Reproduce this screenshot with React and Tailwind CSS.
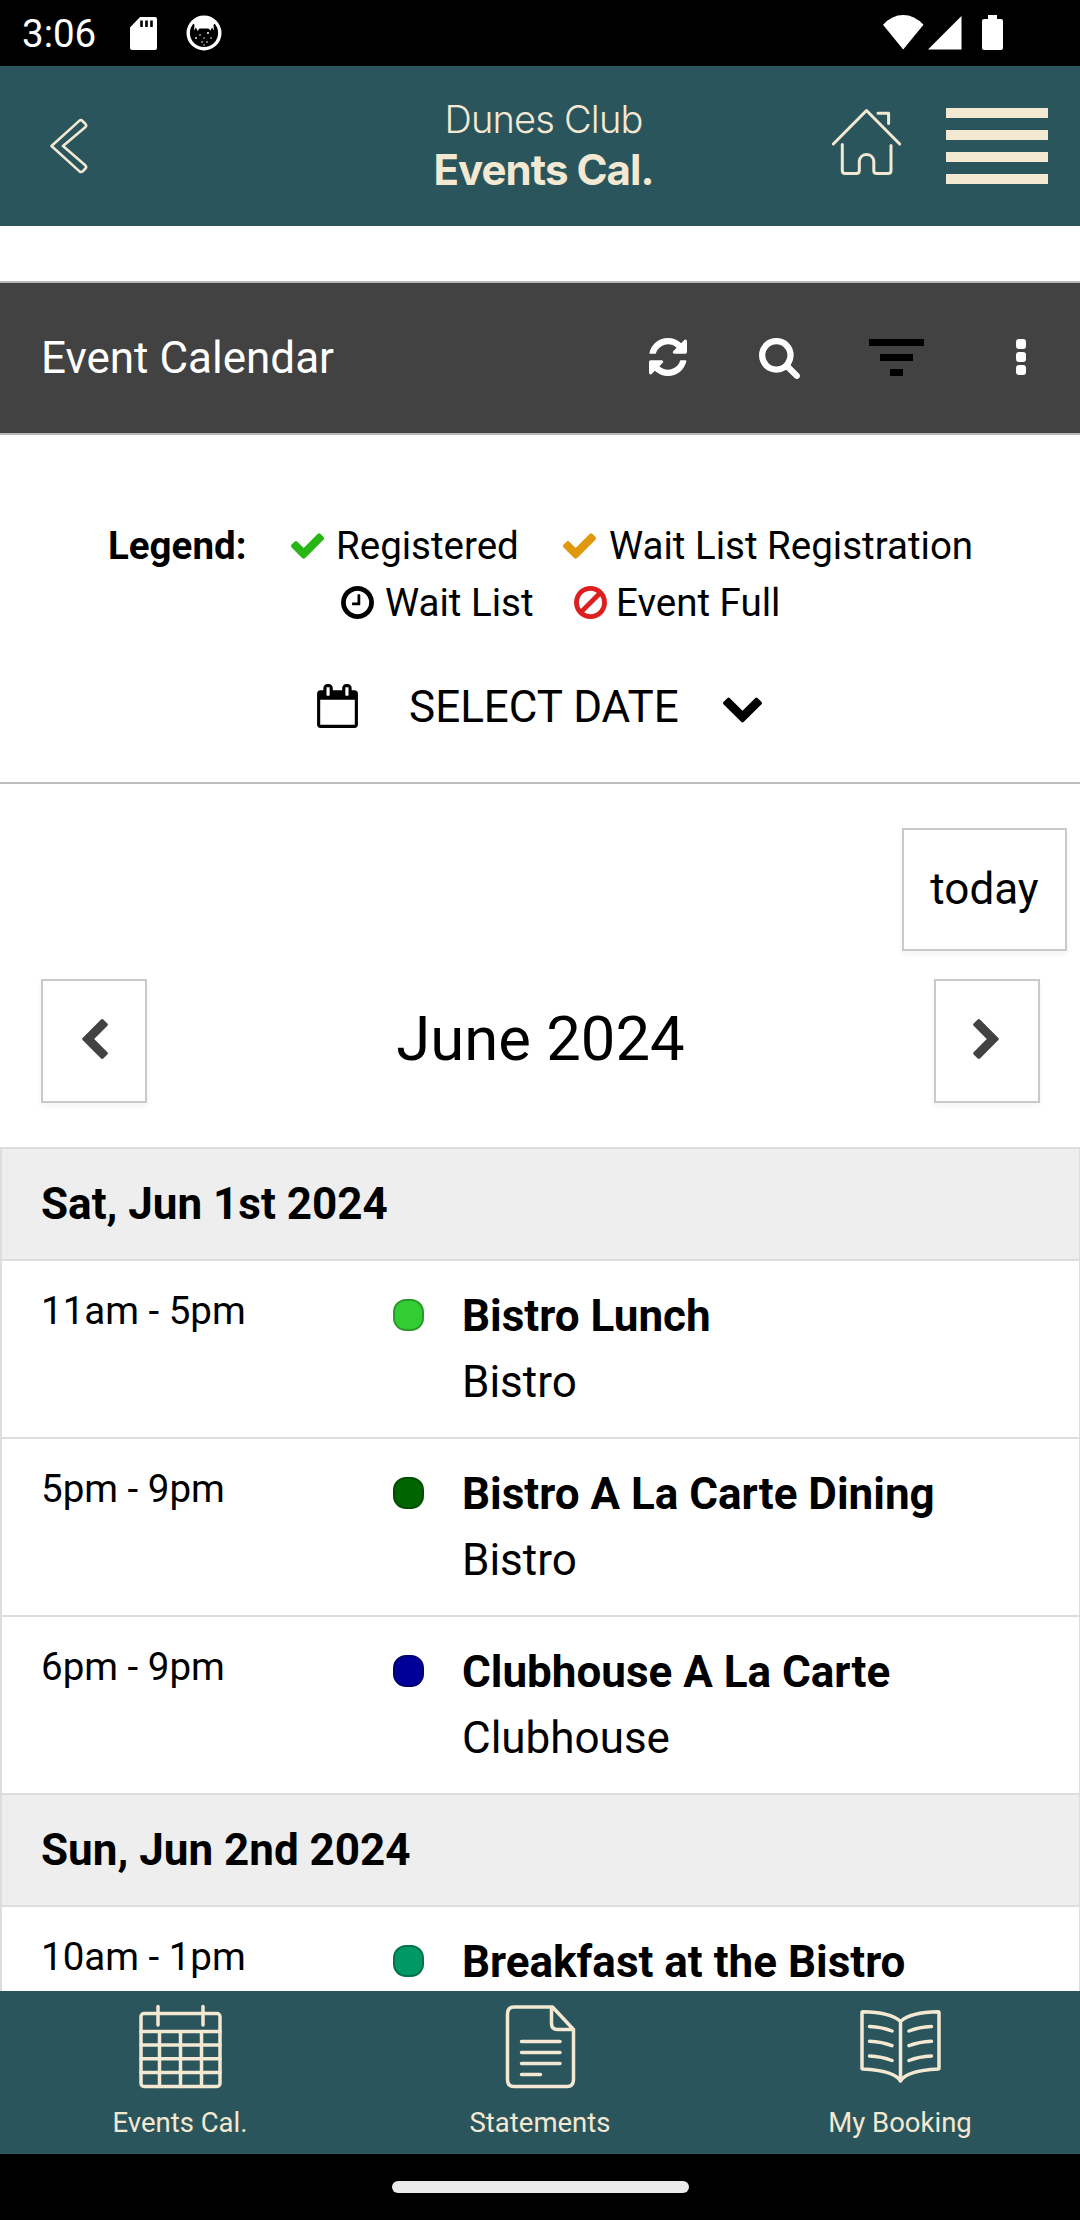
const ICONS = {
  refresh: {
    box: '128 128 1536 1536',
    d: 'M1639 1056q0 5-1 7-64 268-268 434.5t-478 166.5q-146 0-282.5-55t-243.5-157l-129 129q-19 19-45 19t-45-19-19-45v-448q0-26 19-45t45-19h448q26 0 45 19t19 45-19 45l-137 137q71 66 161 102t187 36q134 0 250-65t186-179q11-17 53-117 8-23 30-23h192q13 0 22.5 9.5t9.5 22.5zm25-800v448q0 26-19 45t-45 19h-448q-26 0-45-19t-19-45 19-45l138-138q-148-137-349-137-134 0-250 65t-186 179q-11 17-53 117-8 23-30 23h-199q-13 0-22.5-9.5t-9.5-22.5v-7q65-268 270-434.5t480-166.5q146 0 284 55.5t245 156.5l130-129q19-19 45-19t45 19 19 45z',
  },
  search: {
    box: '64 128 1664 1664',
    d: 'M1216 832q0-185-131.5-316.5t-316.5-131.5-316.5 131.5-131.5 316.5 131.5 316.5 316.5 131.5 316.5-131.5 131.5-316.5zm512 832q0 52-38 90t-90 38q-54 0-90-38l-343-342q-179 124-399 124-143 0-273.5-55.5t-225-150-150-225-55.5-273.5 55.5-273.5 150-225 225-150 273.5-55.5 273.5 55.5 225 150 150 225 55.5 273.5q0 220-124 399l343 343q37 37 37 90z',
  },
  check: {
    box: '121 334 1550 1188',
    d: 'M1671 566q0 40-28 68l-724 724-136 136q-28 28-68 28t-68-28l-136-136-362-362q-28-28-28-68t28-68l136-136q28-28 68-28t68 28l294 295 656-657q28-28 68-28t68 28l136 136q28 28 28 68z',
  },
  clock: {
    box: '128 128 1536 1536',
    d: 'M1024 544v448q0 14-9 23t-23 9h-320q-14 0-23-9t-9-23v-64q0-14 9-23t23-9h224v-352q0-14 9-23t23-9h64q14 0 23 9t9 23zm416 352q0-148-73-273t-198-198-273-73-273 73-198 198-73 273 73 273 198 198 273 73 273-73 198-198 73-273zm224 0q0 209-103 385.5t-279.5 279.5-385.5 103-385.5-103-279.5-279.5-103-385.5 103-385.5 279.5-279.5 385.5-103 385.5 103 279.5 279.5 103 385.5z',
  },
  ban: {
    box: '128 123 1536 1541',
    d: 'M1440 893q0-161-87-295l-754 753q137 89 297 89 111 0 211.5-43.5t173.5-116.5 116-174.5 43-212.5zm-999 299l755-754q-135-91-300-91-148 0-273 73t-198 199-73 274q0 162 89 299zm1223-299q0 157-61 300t-163.5 246-245 164-298.5 61-298.5-61-245-164-163.5-246-61-300 61-299.5 163.5-245.5 245-164 298.5-61 298.5 61 245 164 163.5 245.5 61 299.5z',
  },
  calendar: {
    box: '64 0 1664 1792',
    d: 'M192 1664h1408v-1024h-1408v1024zm384-1216v-288q0-14-9-23t-23-9h-64q-14 0-23 9t-9 23v288q0 14 9 23t23 9h64q14 0 23-9t9-23zm768 0v-288q0-14-9-23t-23-9h-64q-14 0-23 9t-9 23v288q0 14 9 23t23 9h64q14 0 23-9t9-23zm384-64v1280q0 52-38 90t-90 38h-1408q-52 0-90-38t-38-90v-1280q0-52 38-90t90-38h128v-96q0-66 47-113t113-47h64q66 0 113 47t47 113v96h384v-96q0-66 47-113t113-47h64q66 0 113 47t47 113v96h128q52 0 90 38t38 90z',
  },
  chevronDown: {
    box: '90 533 1612 1035',
    d: 'M1683 808l-742 741q-19 19-45 19t-45-19l-742-741q-19-19-19-45.5t19-45.5l166-165q19-19 45-19t45 19l531 531 531-531q19-19 45-19t45 19l166 165q19 19 19 45.5t-19 45.5z',
  },
  chevronLeft: {
    box: '410 26 1036 1612',
    d: 'M1427 301l-531 531 531 531q19 19 19 45t-19 45l-166 166q-19 19-45 19t-45-19l-742-742q-19-19-19-45t19-45l742-742q19-19 45-19t45 19l166 166q19 19 19 45t-19 45z',
  },
};

const DAYS = [
  {
    label: 'Sat, Jun 1st 2024',
    events: [
      { time: '11am - 5pm', title: 'Bistro Lunch', place: 'Bistro', dot: 'bg-[#32cd32] border-[#2b9a2b]' },
      { time: '5pm - 9pm', title: 'Bistro A La Carte Dining', place: 'Bistro', dot: 'bg-[#006400] border-[#004d00]' },
      { time: '6pm - 9pm', title: 'Clubhouse A La Carte', place: 'Clubhouse', dot: 'bg-[#000099] border-[#000073]' },
    ],
  },
  {
    label: 'Sun, Jun 2nd 2024',
    events: [
      { time: '10am - 1pm', title: 'Breakfast at the Bistro', dot: 'bg-[#009966] border-[#00734d]' },
    ],
  },
];

function Icon({ name, className }) {
  return (
    <svg className={`shrink-0 fill-current ${className}`} viewBox={ICONS[name].box} aria-hidden="true">
      <path d={ICONS[name].d} />
    </svg>
  );
}

function StatusBar() {
  return (
    <div className="flex h-[66px] shrink-0 items-center bg-black pl-[22px] pr-[77px] text-white">
      <span className="w-[107px] pt-[2px] text-[38.5px] leading-[66px]">3:06</span>
      <svg className="h-[35px] w-[29px]" viewBox="0 0 29 35" aria-hidden="true">
        <path
          fill="currentColor"
          d="M11 1h15q2 0 2 2v29q0 2-2 2H3q-2 0-2-2V11.500zM11.200 4.500v6.500h2.600V4.500zM16.200 4.500v6.500h2.600V4.500zM21.200 4.500v6.500h2.600V4.500z"
          fillRule="evenodd"
        />
      </svg>
      <svg className="ml-[28px] h-[36px] w-[36px]" viewBox="0 0 36 36" aria-hidden="true">
        <circle cx="18" cy="18" r="15.800" fill="none" stroke="currentColor" strokeWidth="3.400" />
        <path
          fill="currentColor"
          d="M7 8Q18-2 29 8L27.500 10 28 15.500 26 12.500 24.500 15.500 22.500 13.500H13.500L11.500 16 10 12.500 8 15.500 8.500 10z"
        />
        <g fill="currentColor">
          <circle cx="14" cy="20" r=".8" />
          <circle cx="22" cy="18" r="1" />
          <circle cx="10" cy="23" r=".9" />
          <circle cx="18" cy="23" r=".7" />
          <circle cx="25" cy="23" r=".8" />
          <circle cx="16" cy="27" r=".8" />
          <circle cx="21" cy="27" r=".8" />
          <circle cx="18" cy="30" r=".7" />
        </g>
      </svg>
      <svg className="ml-auto h-[36px] w-[121px]" viewBox="0 0 121 36" fill="currentColor" aria-hidden="true">
        <path d="M1 9.800Q10 0 21.200 0T41.500 9.800L21.200 34.500z" />
        <path d="M79.500 1v33.500H46z" />
        <path d="M106 0h9v4h4q2 0 2 2v27q0 2-2 2h-17q-2 0-2-2V6q0-2 2-2h4z" />
      </svg>
    </div>
  );
}

function Header() {
  return (
    <header className="flex h-[160px] shrink-0 bg-[#2b555c] text-[#f3e8d2]">
      <button type="button" className="flex w-[396px] items-center pl-[48px]" aria-label="Back">
        <svg className="h-[56px] w-[40px]" viewBox="0 0 40 56" fill="none" stroke="currentColor" strokeWidth="2.600" strokeLinejoin="round" aria-hidden="true">
          <path d="M3.500 28L31.500 2.600Q33 1.500 34.500 3L37.500 6Q38.800 7.500 37.500 9L15 28 37.500 47.500Q38.800 49 37.500 50.500L34.500 53.500Q33 54.500 31.500 53.400z" />
        </svg>
      </button>
      <div className="w-[295px] whitespace-nowrap pt-[28px] text-center font-[Inter,sans-serif]">
        <div className="text-[38px] font-[350] leading-[50px] tracking-[-0.8px]">Dunes Club</div>
        <div className="text-[42px] font-bold leading-[52px] tracking-[-0.95px]">Events Cal.</div>
      </div>
      <div className="flex flex-1 pl-[139px]">
        <svg className="mt-[40px] h-[72px] w-[74px]" viewBox="830 106 74 72" fill="none" stroke="currentColor" strokeWidth="3" strokeLinecap="round" strokeLinejoin="round" aria-hidden="true">
          <path d="M833.300 144L866.500 110.500 899.700 144" />
          <path d="M878 113.200h10.600v10.300" />
          <path d="M842.300 144.500v26q0 3 3 3h11q3 0 3-3V161a7.300 7.300 0 0 1 14.500 0v9.500q0 3 3 3H888q3 0 3-3v-25" />
        </svg>
        <div className="ml-[42px] mt-[42px] flex w-[102px] flex-col gap-3">
          <span className="h-[10px] bg-current" />
          <span className="h-[10px] bg-current" />
          <span className="h-[10px] bg-current" />
          <span className="h-[10px] bg-current" />
        </div>
      </div>
    </header>
  );
}

function Toolbar() {
  return (
    <div className="mt-[55px] flex h-[154px] shrink-0 items-center border-y-2 border-[#b8b8b8] bg-[#424242] pl-[41px] text-white">
      <h1 className="w-[608px] text-[44px] leading-[66px]">Event Calendar</h1>
      <Icon name="refresh" className="mb-[2px] size-[38px]" />
      <Icon name="search" className="ml-[72px] mt-px size-[41px]" />
      <div className="mb-px ml-[69px] flex w-[55px] flex-col items-center gap-2">
        <span className="h-[7px] w-[55px] bg-black" />
        <span className="h-[7px] w-[33px] bg-black" />
        <span className="h-[7px] w-[13px] bg-black" />
      </div>
      <div className="mb-[2px] ml-[92px] flex flex-col gap-[2.600px]">
        <span className="size-[10px] rounded-[3px] bg-white" />
        <span className="size-[10px] rounded-[3px] bg-white" />
        <span className="size-[10px] rounded-[3px] bg-white" />
      </div>
    </div>
  );
}

function Legend() {
  return (
    <div className="h-[349px] shrink-0 whitespace-nowrap border-b-2 border-[#bdbdbd] pt-[82px] text-[38.5px] leading-[57px]">
      <div className="flex items-center pl-[108px]">
        <b className="w-[183px]">Legend:</b>
        <Icon name="check" className="h-[26px] w-[33px] text-[#27b614]" />
        <span className="ml-[12px] w-[227px]">Registered</span>
        <Icon name="check" className="h-[26px] w-[33px] text-[#e0980f]" />
        <span className="ml-[13px]">Wait List Registration</span>
      </div>
      <div className="flex items-center pl-[341px]">
        <Icon name="clock" className="size-[33px]" />
        <span className="ml-[11px] w-[189px]">Wait List</span>
        <Icon name="ban" className="size-[33px] text-[#dd1f1f]" />
        <span className="ml-[9px]">Event Full</span>
      </div>
      <div className="mt-[43px] flex items-center pl-[317px] text-[44px] leading-[66px]">
        <Icon name="calendar" className="mb-[2px] h-[44px] w-[41px]" />
        <span className="ml-[51px] w-[314px]">SELECT DATE</span>
        <Icon name="chevronDown" className="mt-[5px] h-[26px] w-[39px]" />
      </div>
    </div>
  );
}

function MonthNav() {
  return (
    <div className="h-[363px] shrink-0 pt-[44px]">
      <div className="flex justify-end pr-[13px]">
        <button type="button" className="h-[123px] w-[165px] border-2 border-[#c9c9c9] pb-[2px] text-[44px] shadow-[0_3px_6px_rgba(0,0,0,0.05)]">
          today
        </button>
      </div>
      <div className="mt-[28px] flex items-center justify-between pl-[41px] pr-[40px]">
        <button type="button" className="flex h-[124px] w-[106px] items-center justify-center border-2 border-[#c9c9c9] pb-1 pl-[2px] shadow-[0_3px_6px_rgba(0,0,0,0.05)]" aria-label="Previous month">
          <Icon name="chevronLeft" className="h-[40px] w-[26px] text-[#424242]" />
        </button>
        <h2 className="pb-[4px] text-[61.6px] leading-[80px]">June 2024</h2>
        <button type="button" className="flex h-[124px] w-[106px] items-center justify-center border-2 border-[#c9c9c9] pb-1 pr-[2px] shadow-[0_3px_6px_rgba(0,0,0,0.05)]" aria-label="Next month">
          <Icon name="chevronLeft" className="h-[40px] w-[26px] rotate-180 text-[#424242]" />
        </button>
      </div>
    </div>
  );
}

function EventRow({ event }) {
  return (
    <li className="flex h-[178px] whitespace-nowrap border-b-2 border-[#ddd] pl-[39px] pt-[22px]">
      <span className="w-[352px] text-[38.5px] leading-[56px]">{event.time}</span>
      <span className={`mt-4 h-[32px] w-[31px] rounded-[13px] border-2 ${event.dot}`} />
      <div className="ml-[38px] text-[44px] leading-[66px]">
        <div className="font-bold">{event.title}</div>
        {event.place && <div>{event.place}</div>}
      </div>
    </li>
  );
}

function TabItem({ label, children }) {
  return (
    <button type="button" className="flex flex-1 flex-col items-center pt-[13px]">
      <svg className="h-[86px] w-[86px]" viewBox="0 0 86 86" fill="none" stroke="currentColor" strokeWidth="3.500" strokeLinecap="round" strokeLinejoin="round" aria-hidden="true">
        {children}
      </svg>
      <span className="mt-[17px] text-[27.5px] leading-[32px]">{label}</span>
    </button>
  );
}

function TabBar() {
  return (
    <nav className="flex h-[163px] shrink-0 bg-[#2b555c] text-[#f3e8d2]">
      <TabItem label="Events Cal.">
        <rect x="4" y="9.500" width="79" height="73" rx="3" />
        <path d="M21 2.500v18.500M66 2.500v18.500M4 27.500h79M4 41h79M4 54.800h79M4 68.500h79M22.500 27.500v55M43.500 27.500v55M64.500 27.500v55" />
      </TabItem>
      <TabItem label="Statements">
        <path d="M46 3H17q-6.500 0-6.500 7v65.500q0 7 6.500 7h53q6.500 0 6.500-7V25.500L55.500 3H46M54.500 4v15.500q0 6 6 6h15" />
        <path d="M24.500 37.500h38.500M24.500 48.500h38.500M24.500 59.500h38.500M24.500 70.500h19" />
      </TabItem>
      <TabItem label="My Booking">
        <path d="M43.500 17.500Q33 8 6 7.800 5 7.800 5 8.800V64Q5 65 6 65 37 66.500 43.500 77 50 66.500 81 65 82 65 82 64V8.800Q82 7.800 81 7.800 54 8 43.500 17.500V76" />
        <path d="M12.500 22.500Q25 23 35 27M12.500 37.200Q25 37.700 35 41.700M12.500 52Q25 52.500 35 56.500M74.500 22.500Q62 23 52 27M74.500 37.200Q62 37.700 52 41.700M74.500 52Q62 52.500 52 56.500" />
      </TabItem>
    </nav>
  );
}

function App() {
  return (
    <div className="flex h-[2220px] w-[1080px] flex-col overflow-hidden bg-white font-[Roboto,sans-serif] text-black">
      <StatusBar />
      <Header />
      <Toolbar />
      <Legend />
      <MonthNav />
      <main className="min-h-0 flex-1 overflow-hidden border-l-2 border-r border-t-2 border-[#ddd]">
        {DAYS.map((day) => (
          <section key={day.label}>
            <h3 className="h-[112px] border-b-2 border-[#ddd] bg-[#eee] pl-[39px] text-[44px] font-bold leading-[110px]">
              {day.label}
            </h3>
            <ul>
              {day.events.map((event) => (
                <EventRow key={event.title} event={event} />
              ))}
            </ul>
          </section>
        ))}
      </main>
      <TabBar />
      <div className="flex h-[66px] shrink-0 justify-center bg-black pt-[27px]">
        <span className="h-[12px] w-[297px] rounded-full bg-[#ebebeb]" />
      </div>
    </div>
  );
}

export default App;
